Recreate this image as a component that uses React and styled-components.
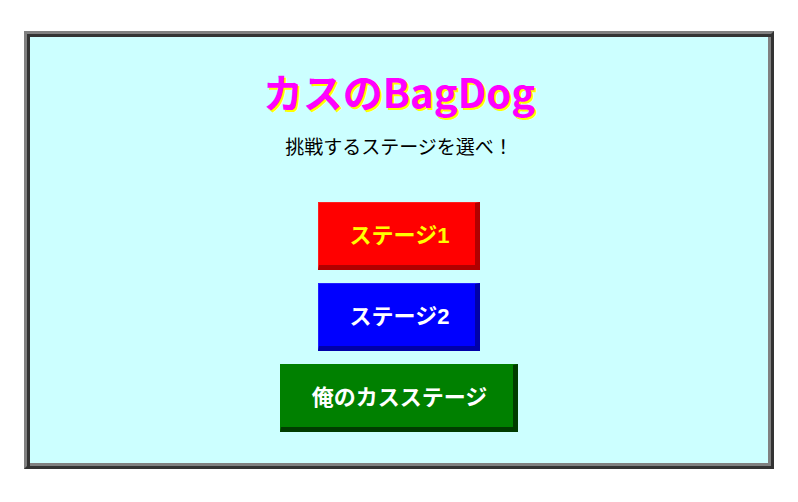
import React from 'react';
import styled, { createGlobalStyle } from 'styled-components';

const Global = createGlobalStyle`
  body {
    margin: 0;
    background: #ffffff;
    font-family: "Noto Sans CJK JP", "Noto Sans", sans-serif;
  }
`;

const Page = styled.div`
  padding: 31px 24px 0;
`;

const Panel = styled.div`
  width: 750px;
  height: 438px;
  box-sizing: border-box;
  margin: 0 auto;
  background: #ccffff;
  border: 3px solid;
  border-color: #808080 #333333 #333333 #808080;
  box-shadow: inset 3px 3px 0 #333333, inset -3px -3px 0 #808080;
  display: flex;
  flex-direction: column;
  align-items: center;
  padding-top: 28px;
`;

const Title = styled.h1`
  margin: 0;
  font-size: 40px;
  font-weight: 700;
  line-height: 58px;
  color: #ff00ff;
  text-shadow: 2px 2px 0 #ffff00;
`;

const Lead = styled.p`
  margin: 12px 0 0;
  font-size: 19px;
  line-height: 28px;
  color: #000000;
`;

const Stages = styled.div`
  margin-top: 42px;
  display: flex;
  flex-direction: column;
  align-items: center;
  gap: 13px;
`;

const StageButton = styled.button`
  font-family: "Liberation Sans", "Noto Sans CJK JP", sans-serif;
  font-size: 22px;
  font-weight: 700;
  line-height: 32px;
  padding: 13px 26px 13px 31px;
  padding-top: 17px;
  border-style: solid;
  border-width: 1px 5px 5px 1px;
  border-color: ${p => p.$light} ${p => p.$dark} ${p => p.$dark} ${p => p.$light};
  background: ${p => p.$bg};
  color: ${p => p.$fg};
  cursor: pointer;
`;

const stages = [
  { label: 'ステージ1', bg: '#ff0000', light: '#ff2020', dark: '#b00000', fg: '#ffff00' },
  { label: 'ステージ2', bg: '#0000ff', light: '#2020ff', dark: '#0000a8', fg: '#ffffff' },
  { label: '俺のカスステージ', bg: '#008000', light: '#008000', dark: '#003c00', fg: '#ffffff' },
];

export default function App() {
  return (
    <>
      <Global />
      <Page>
        <Panel>
          <Title>カスのBagDog</Title>
          <Lead>挑戦するステージを選べ！</Lead>
          <Stages>
            {stages.map(s => (
              <StageButton key={s.label} $bg={s.bg} $light={s.light} $dark={s.dark} $fg={s.fg}>
                {s.label}
              </StageButton>
            ))}
          </Stages>
        </Panel>
      </Page>
    </>
  );
}
